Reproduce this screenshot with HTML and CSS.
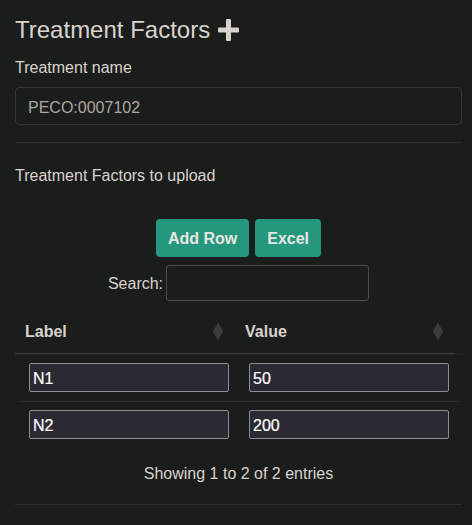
FILE: index.html
```html
<!DOCTYPE html>
<html lang="en">
<head>
<meta charset="utf-8">
<title>Treatment Factors</title>
<link rel="stylesheet" href="styles.css">
</head>
<body>
<div class="panel">
  <h3 class="title">Treatment Factors
    <svg class="plus" width="21" height="22" viewBox="0 0 21 22" aria-hidden="true">
      <rect x="8" y="0" width="5" height="22" rx="1.2"/>
      <rect x="0" y="8.5" width="21" height="5" rx="1.2"/>
    </svg>
  </h3>
  <label class="field-label">Treatment name</label>
  <div class="name-box">PECO:0007102</div>
  <hr class="rule rule-top">
  <p class="subhead">Treatment Factors to upload</p>
  <div class="buttons">
    <button class="btn">Add Row</button>
    <button class="btn">Excel</button>
  </div>
  <div class="search">
    <span>Search:</span>
    <div class="search-input"></div>
  </div>
  <div class="table">
    <div class="thead-wrap">
      <div class="thead">
        <div class="th">Label<span class="sort"></span></div>
        <div class="th">Value<span class="sort"></span></div>
      </div>
    </div>
    <div class="tbody">
      <div class="tr">
        <div class="td"><div class="cell-input">N1</div></div>
        <div class="td"><div class="cell-input">50</div></div>
      </div>
      <div class="tr">
        <div class="td"><div class="cell-input">N2</div></div>
        <div class="td"><div class="cell-input">200</div></div>
      </div>
    </div>
  </div>
  <div class="info">Showing 1 to 2 of 2 entries</div>
  <hr class="rule rule-bottom">
</div>
</body>
</html>
```

FILE: styles.css
```css
html, body {
  margin: 0;
  background: #1b1c1c;
}
body {
  font-family: "Liberation Sans", Arial, sans-serif;
  color: #d8d4cd;
  font-size: 16px;
}
.panel {
  padding: 0 10px 0 15px;
  display: flex;
  flex-direction: column;
}
.title {
  margin: 17px 0 0;
  font-size: 24px;
  line-height: 26.4px;
  font-weight: normal;
  display: flex;
  align-items: center;
  gap: 8px;
}
.plus {
  fill: #d8d4cd;
}
.field-label {
  margin-top: 15px;
  line-height: 20px;
}
.name-box {
  margin-top: 9px;
  height: 38px;
  box-sizing: border-box;
  border: 1px solid #333435;
  border-radius: 4px;
  padding: 2px 12px 0;
  line-height: 36px;
  color: #aca8a1;
}
.rule {
  border: 0;
  height: 1px;
  margin: 0;
  background: #2c2d2d;
}
.rule-top {
  margin-top: 17px;
}
.subhead {
  margin: 23px 0 0;
  line-height: 20px;
}
.buttons {
  margin-top: 33px;
  display: flex;
  justify-content: center;
  gap: 6px;
}
.btn {
  height: 38px;
  padding: 2px 12px 0;
  border: 0;
  border-radius: 4px;
  background: #25977c;
  color: #e8e6e3;
  font-family: inherit;
  font-size: 16px;
  font-weight: bold;
}
.search {
  margin-top: 8px;
  display: flex;
  justify-content: center;
  align-items: center;
  gap: 3px;
}
.search span {
  padding-top: 2px;
}
.search-input {
  width: 203px;
  height: 36px;
  box-sizing: border-box;
  border: 1px solid #4a4b4c;
  border-radius: 3px;
}
.table {
  margin-top: 8px;
}
.thead-wrap {
  border-bottom: 1px solid #262727;
}
.thead {
  width: 440px;
  display: grid;
  grid-template-columns: 220px 220px;
  border-bottom: 1px solid #3b3935;
}
.th {
  position: relative;
  padding: 12px 10px 10px;
  line-height: 22px;
  font-weight: bold;
}
.sort {
  position: absolute;
  right: 12px;
  top: 13px;
  width: 10px;
  height: 18px;
  background: #3a3b3b;
  clip-path: polygon(50% 0, 100% 50%, 50% 100%, 0 50%);
}
.tbody {
  margin-left: 4px;
  width: 440px;
}
.tr {
  display: grid;
  grid-template-columns: 220px 220px;
}
.tr + .tr {
  border-top: 1px solid #2c2d2d;
}
.td {
  padding: 8px 10px 9px;
}
.cell-input {
  width: 200px;
  height: 29px;
  box-sizing: border-box;
  border: 1px solid #8e8d96;
  border-radius: 2px;
  background: #2b2a33;
  color: #ffffff;
  padding: 1px 3px 0;
  line-height: 27px;
  -webkit-text-stroke: 0.2px #ffffff;
}
.info {
  margin-top: 15px;
  text-align: center;
  line-height: 22px;
}
.rule-bottom {
  margin-top: 19px;
}
```
